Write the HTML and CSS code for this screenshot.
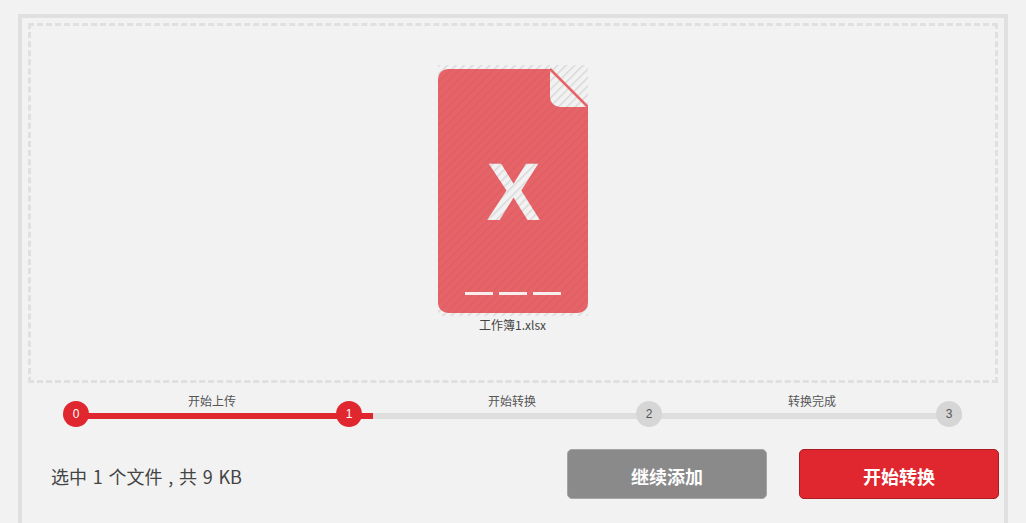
FILE: index.html
```html
<!DOCTYPE html>
<html lang="zh-CN">
<head>
    <meta charset="UTF-8">
    <title>文件转换</title>
    <link rel="stylesheet" href="styles.css">
</head>
<body>
    <div class="panel">
        <div class="dropzone">
            <div class="file">
                <svg class="file-icon" width="150" height="251" viewBox="0 0 150 251">
                    <defs>
                        <pattern id="hatch" width="6" height="6" patternUnits="userSpaceOnUse" patternTransform="rotate(45)">
                            <rect width="6" height="6" fill="#f2f2f2"/>
                            <rect width="1.5" height="6" fill="#d9d9d9"/>
                        </pattern>
                        <pattern id="hatchRed" width="6" height="6" patternUnits="userSpaceOnUse" patternTransform="rotate(45)">
                            <rect width="6" height="6" fill="#e66367"/>
                            <rect width="1.5" height="6" fill="#de5f64"/>
                        </pattern>
                    </defs>
                    <rect x="0" y="0" width="150" height="251" fill="url(#hatch)"/>
                    <path d="M10 4H112L150 42V238a10 10 0 0 1-10 10H10A10 10 0 0 1 0 238V14A10 10 0 0 1 10 4Z" fill="url(#hatchRed)"/>
                    <path d="M112 4L150 42H122A10 10 0 0 1 112 32Z" fill="url(#hatch)"/>
                    <path d="M112 4L150 42" stroke="#e66367" stroke-width="2.5" fill="none"/>
                    <text class="file-letter" x="75.5" y="155" text-anchor="middle" fill="url(#hatch)">X</text>
                    <rect x="27" y="227" width="28" height="3" fill="#f6eeee"/>
                    <rect x="61" y="227" width="28" height="3" fill="#f6eeee"/>
                    <rect x="95" y="227" width="28" height="3" fill="#f6eeee"/>
                </svg>
                <div class="file-name">工作簿1.xlsx</div>
            </div>
        </div>

        <div class="progress">
            <div class="step-labels">
                <span>开始上传</span>
                <span>开始转换</span>
                <span>转换完成</span>
            </div>
            <div class="track">
                <div class="track-fill" style="width: 301px"></div>
            </div>
            <span class="dot dot-0 active">0</span>
            <span class="dot dot-1 active">1</span>
            <span class="dot dot-2">2</span>
            <span class="dot dot-3">3</span>
        </div>

        <div class="footer">
            <div class="summary">选中 1 个文件 , 共 9 KB</div>
            <div class="actions">
                <button class="btn btn-gray">继续添加</button>
                <button class="btn btn-red">开始转换</button>
            </div>
        </div>
    </div>
</body>
</html>
```

FILE: styles.css
```css
html, body {
    margin: 0;
    height: 523px;
    overflow: hidden;
    background: #f2f2f2;
    font-family: "Noto Sans CJK SC", "Liberation Sans", sans-serif;
    color: #444;
}
.panel {
    box-sizing: border-box;
    width: 990px;
    height: 509px;
    margin: 14px 0 0 18px;
    padding: 5px 6px;
    border: 4px solid #e0e0e0;
    border-bottom: 0;
}
.dropzone {
    box-sizing: border-box;
    width: 970px;
    height: 360px;
    border: 3px dashed #e0e0e0;
    display: flex;
    justify-content: center;
    padding-top: 39px;
}
.file {
    width: 150px;
    margin-left: -1px;
    text-align: center;
}
.file-icon {
    display: block;
}
.file-letter {
    font-family: "Liberation Sans", sans-serif;
    font-weight: bold;
    font-size: 81px;
}
.file-name {
    font-size: 12px;
    line-height: 16px;
    margin-top: 1px;
    color: #444;
}
.progress {
    position: relative;
    width: 900px;
    margin: 8px 0 0 34px;
}
.step-labels {
    display: flex;
    height: 20px;
}
.step-labels span {
    flex: 1;
    text-align: center;
    font-size: 12px;
    line-height: 20px;
    color: #555;
}
.track {
    height: 6px;
    margin: 2px 0 0 10px;
    background: #dedede;
}
.track-fill {
    height: 6px;
    background: #e0262e;
}
.dot {
    position: absolute;
    top: 10px;
    width: 26px;
    height: 26px;
    border-radius: 50%;
    background: #d6d6d6;
    color: #555;
    font-family: "Liberation Sans", sans-serif;
    font-size: 12px;
    line-height: 26px;
    text-align: center;
}
.dot.active {
    background: #e0262e;
    color: #fff;
}
.dot-0 { left: 1px; }
.dot-1 { left: 274px; }
.dot-2 { left: 574px; }
.dot-3 { left: 874px; }
.footer {
    display: flex;
    justify-content: space-between;
    align-items: center;
    width: 971px;
    margin-top: 30px;
}
.summary {
    font-size: 18px;
    margin-left: 23px;
    padding-top: 4px;
    word-spacing: 1.7px;
    color: #444;
}
.actions {
    display: flex;
    gap: 32px;
}
.btn {
    box-sizing: border-box;
    width: 200px;
    height: 50px;
    padding: 3px 0 0;
    border-radius: 5px;
    font-family: "Noto Sans CJK SC", sans-serif;
    font-size: 18px;
    font-weight: bold;
    color: #fff;
}
.btn-gray {
    background: #8a8a8a;
    border: 1px solid #a5a5a5;
}
.btn-red {
    background: #e0262e;
    border: 1px solid #a81c22;
}
```
